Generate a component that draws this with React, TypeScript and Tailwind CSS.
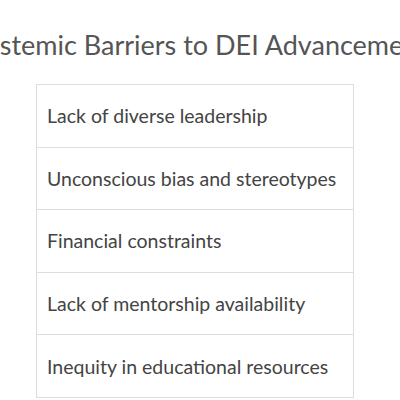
export default function App() {
  const rows = [
    'Lack of diverse leadership',
    'Unconscious bias and stereotypes',
    'Financial constraints',
    'Lack of mentorship availability',
    'Inequity in educational resources',
  ]

  return (
    <div className="w-[400px] h-[400px] overflow-hidden bg-white font-['Lato',sans-serif]">
      <div className="flex justify-center pt-[28px] h-[84px]">
        <h1 className="whitespace-nowrap text-[27px] leading-[34px] text-[#555]">
          Systemic Barriers to DEI Advancement
        </h1>
      </div>
      <table className="ml-[36px] w-[318px] table-fixed border-collapse">
        <tbody>
          {rows.map((r) => (
            <tr key={r}>
              <td className="h-[62.6px] whitespace-nowrap border border-[#ddd] px-[10px] text-[19.5px] text-[#444]">
                {r}
              </td>
            </tr>
          ))}
        </tbody>
      </table>
    </div>
  )
}
